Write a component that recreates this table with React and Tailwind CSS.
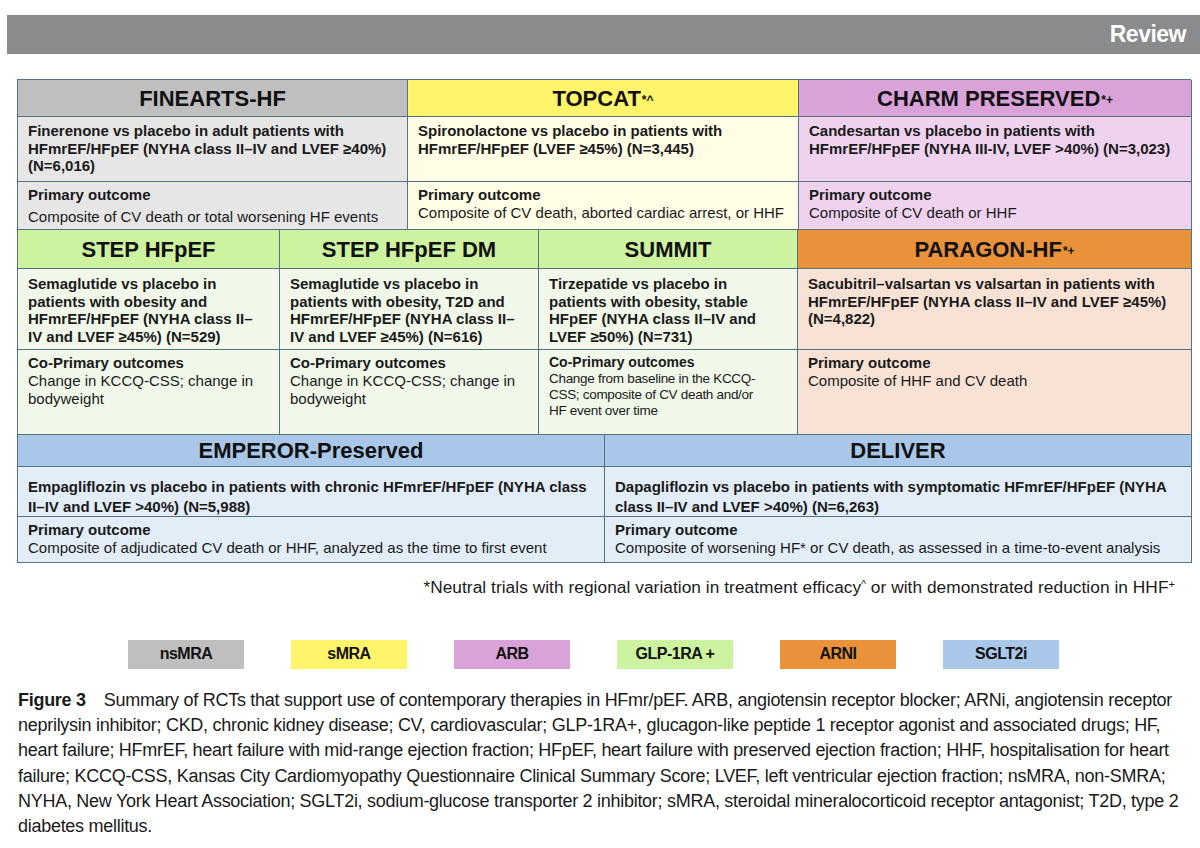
import React from 'react'

const C = {
  gray: { head: 'bg-[#bfbfbf]', body: 'bg-[#e6e6e6]' },
  yellow: { head: 'bg-[#fff46a]', body: 'bg-[#fffde6]' },
  purple: { head: 'bg-[#d9a2d9]', body: 'bg-[#eed2ee]' },
  green: { head: 'bg-[#cdf3a0]', body: 'bg-[#f1f8ea]' },
  orange: { head: 'bg-[#e9923a]', body: 'bg-[#f8e2d6]' },
  blue: { head: 'bg-[#a9c7e8]', body: 'bg-[#e2edf7]' },
}

const cell = 'border-r border-b border-[#56717f]'

const rowOne = [
  {
    name: 'FINEARTS-HF',
    color: C.gray,
    desc: ['Finerenone vs placebo in adult patients with', 'HFmrEF/HFpEF (NYHA class II–IV and LVEF ≥40%)', '(N=6,016)'],
    label: 'Primary outcome',
    out: ['Composite of CV death or total worsening HF events'],
    gap: true,
  },
  {
    name: 'TOPCAT',
    sup: '*^',
    color: C.yellow,
    desc: ['Spironolactone vs placebo in patients with', 'HFmrEF/HFpEF (LVEF ≥45%) (N=3,445)'],
    label: 'Primary outcome',
    out: ['Composite of CV death, aborted cardiac arrest, or HHF'],
  },
  {
    name: 'CHARM PRESERVED',
    sup: '*+',
    color: C.purple,
    desc: ['Candesartan vs placebo in patients with', 'HFmrEF/HFpEF (NYHA III-IV, LVEF >40%) (N=3,023)'],
    label: 'Primary outcome',
    out: ['Composite of CV death or HHF'],
  },
]

const rowTwo = [
  {
    name: 'STEP HFpEF',
    color: C.green,
    desc: ['Semaglutide vs placebo in', 'patients with obesity and', 'HFmrEF/HFpEF (NYHA class II–', 'IV and LVEF ≥45%) (N=529)'],
    label: 'Co-Primary outcomes',
    out: ['Change in KCCQ-CSS; change in', 'bodyweight'],
  },
  {
    name: 'STEP HFpEF DM',
    color: C.green,
    desc: ['Semaglutide vs placebo in', 'patients with obesity, T2D and', 'HFmrEF/HFpEF (NYHA class II–', 'IV and LVEF ≥45%) (N=616)'],
    label: 'Co-Primary outcomes',
    out: ['Change in KCCQ-CSS; change in', 'bodyweight'],
  },
  {
    name: 'SUMMIT',
    color: C.green,
    desc: ['Tirzepatide vs placebo in', 'patients with obesity, stable', 'HFpEF (NYHA class II–IV and', 'LVEF ≥50%) (N=731)'],
    label: 'Co-Primary outcomes',
    out: ['Change from baseline in the KCCQ-', 'CSS; composite of CV death and/or', 'HF event over time'],
    small: true,
  },
  {
    name: 'PARAGON-HF',
    sup: '*+',
    color: C.orange,
    desc: ['Sacubitril–valsartan vs valsartan in patients with', 'HFmrEF/HFpEF (NYHA class II–IV and LVEF ≥45%)', '(N=4,822)'],
    label: 'Primary outcome',
    out: ['Composite of HHF and CV death'],
  },
]

const rowThree = [
  {
    name: 'EMPEROR-Preserved',
    color: C.blue,
    desc: ['Empagliflozin vs placebo in patients with chronic HFmrEF/HFpEF (NYHA class', 'II–IV and LVEF >40%) (N=5,988)'],
    label: 'Primary outcome',
    out: ['Composite of adjudicated CV death or HHF, analyzed as the time to first event'],
  },
  {
    name: 'DELIVER',
    color: C.blue,
    desc: ['Dapagliflozin vs placebo in patients with symptomatic HFmrEF/HFpEF (NYHA', 'class II–IV and LVEF >40%) (N=6,263)'],
    label: 'Primary outcome',
    out: ['Composite of worsening HF* or CV death, as assessed in a time-to-event analysis'],
  },
]

const Group = ({ trials, cols, rows, descClass }) => (
  <div className={`grid ${cols} ${rows}`}>
    {trials.map((t) => (
      <div key={t.name + 'h'} className={`${cell} ${t.color.head} flex items-center justify-center text-[22px] font-bold text-[#111]`}>
        <span>
          {t.name}
          {t.sup && <sup className="text-[12px] ml-[1px] relative top-[-2px]">{t.sup}</sup>}
        </span>
      </div>
    ))}
    {trials.map((t) => (
      <div key={t.name + 'd'} className={`${cell} ${t.color.body} px-[10px] ${descClass} text-[15px] font-bold text-[#1a1a1a] whitespace-nowrap`}>
        {t.desc.map((l) => (
          <div key={l}>{l}</div>
        ))}
      </div>
    ))}
    {trials.map((t) => (
      <div
        key={t.name + 'o'}
        className={`${cell} ${t.color.body} px-[10px] pt-[4px] text-[#1a1a1a] whitespace-nowrap ${t.small ? 'leading-[16px]' : 'text-[15px] leading-[18px]'}`}
      >
        <div className={`font-bold ${t.small ? 'text-[14px] leading-[17px]' : ''} ${t.gap ? 'mb-[4px]' : ''}`}>{t.label}</div>
        {t.out.map((l) => (
          <div key={l} className={t.small ? 'text-[13.5px] tracking-[-0.3px]' : ''}>{l}</div>
        ))}
      </div>
    ))}
  </div>
)

const legend = [
  ['nsMRA', 'bg-[#bfbfbf]'],
  ['sMRA', 'bg-[#fff46a]'],
  ['ARB', 'bg-[#d9a2d9]'],
  ['GLP-1RA +', 'bg-[#cdf3a0]'],
  ['ARNI', 'bg-[#e9923a]'],
  ['SGLT2i', 'bg-[#a9c7e8]'],
]

const caption = [
  'neprilysin inhibitor; CKD, chronic kidney disease; CV, cardiovascular; GLP-1RA+, glucagon-like peptide 1 receptor agonist and associated drugs; HF,',
  'heart failure; HFmrEF, heart failure with mid-range ejection fraction; HFpEF, heart failure with preserved ejection fraction; HHF, hospitalisation for heart',
  'failure; KCCQ-CSS, Kansas City Cardiomyopathy Questionnaire Clinical Summary Score; LVEF, left ventricular ejection fraction; nsMRA, non-SMRA;',
  'NYHA, New York Heart Association; SGLT2i, sodium-glucose transporter 2 inhibitor; sMRA, steroidal mineralocorticoid receptor antagonist; T2D, type 2',
  'diabetes mellitus.',
]

export default function App() {
  return (
    <div className="w-[1200px] h-[848px] bg-white overflow-hidden font-['Liberation_Sans',Arial,sans-serif]">
      <div className="mt-[15px] ml-[7px] h-[39px] bg-[#8a8b8d] flex items-center justify-end pr-[14px]">
        <span className="text-white font-bold text-[23px] tracking-[-0.5px]">Review</span>
      </div>

      <div className="mt-[25px] ml-[17px] w-[1174px] border-l border-t border-[#56717f]">
        <Group trials={rowOne} cols="grid-cols-[390px_391px_393px]" rows="grid-rows-[37px_65px_48px]" descClass="pt-[5px] leading-[17.5px]" />
        <Group trials={rowTwo} cols="grid-cols-[262px_259px_259px_394px]" rows="grid-rows-[39px_81px_85px]" descClass="pt-[6px] leading-[17.5px]" />
        <Group trials={rowThree} cols="grid-cols-[587px_587px]" rows="grid-rows-[32px_50px_46px]" descClass="pt-[10px] leading-[20px]" />
      </div>

      <div className="mt-[12px] pr-[25px] text-right text-[17.3px] tracking-[0.05px] text-[#1a1a1a]">
        *Neutral trials with regional variation in treatment efficacy<sup className="text-[10px]">^</sup> or with demonstrated reduction in HHF<sup className="text-[11px]">+</sup>
      </div>

      <div className="mt-[39px] ml-[128px] flex gap-[47px]">
        {legend.map(([label, bg]) => (
          <div key={label} className={`w-[116px] h-[29px] ${bg} flex items-center justify-center text-[16px] font-bold tracking-[-0.5px] text-[#111]`}>
            {label}
          </div>
        ))}
      </div>

      <div className="mt-[19px] ml-[18px] text-[18px] leading-[25.2px] tracking-[-0.28px] text-[#1a1a1a] whitespace-nowrap">
        <div>
          <span className="font-bold">Figure 3</span>
          <span className="ml-[18px]">Summary of RCTs that support use of contemporary therapies in HFmr/pEF. ARB, angiotensin receptor blocker; ARNi, angiotensin receptor</span>
        </div>
        {caption.map((line) => (
          <div key={line}>{line}</div>
        ))}
      </div>
    </div>
  )
}
